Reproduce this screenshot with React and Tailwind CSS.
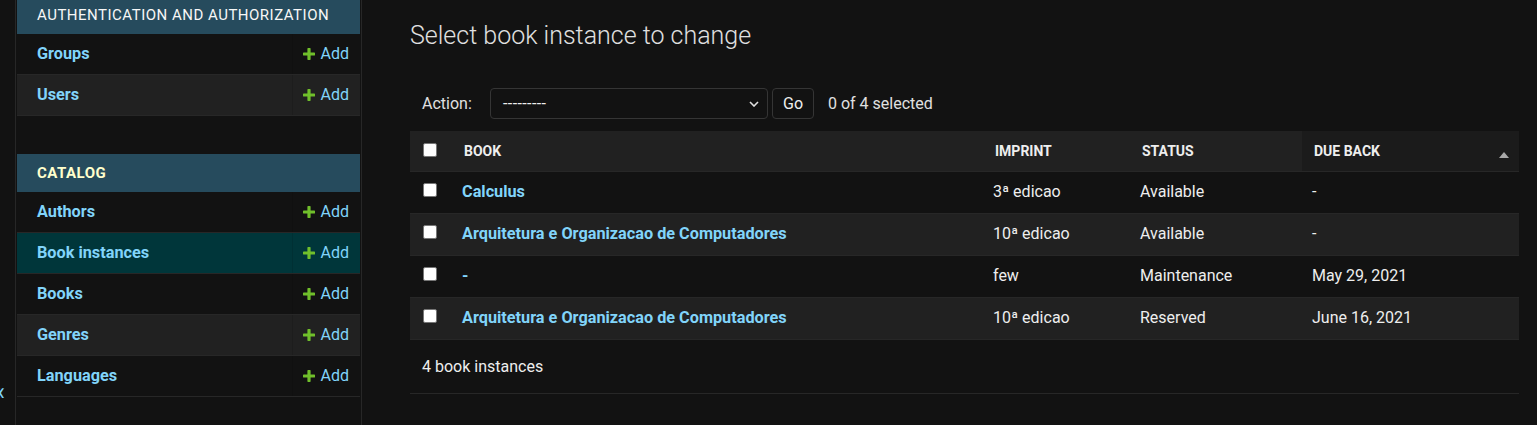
import React from "react";

const Plus = () => (
  <svg width="12" height="12" viewBox="0 0 12 12" className="shrink-0">
    <rect x="4.4" y="0" width="3.2" height="12" rx="0.7" fill="#70bf2b" />
    <rect x="0" y="4.4" width="12" height="3.2" rx="0.7" fill="#70bf2b" />
  </svg>
);

function SideRow({ name, bg }) {
  return (
    <div className={"flex h-[41px] border-b border-[#272727] " + (bg || "")}>
      <div className="flex-1 flex items-center pl-[20px] text-[16.25px] font-bold text-[#81d4fa]">{name}</div>
      <div className="w-[68px] flex items-center justify-end pr-[11px] border-l border-black/10 text-[16px] text-[#81d4fa]">
        <Plus />
        <span className="ml-[6px]">Add</span>
      </div>
    </div>
  );
}

const Checkbox = () => (
  <div className="w-[14px] h-[14px] rounded-[2px] bg-white border border-[#767676]" />
);

const rows = [
  { book: "Calculus", imprint: "3ª edicao", status: "Available", due: "-", bg: "" },
  { book: "Arquitetura e Organizacao de Computadores", imprint: "10ª edicao", status: "Available", due: "-", bg: "bg-[#212121]" },
  { book: "-", imprint: "few", status: "Maintenance", due: "May 29, 2021", bg: "" },
  { book: "Arquitetura e Organizacao de Computadores", imprint: "10ª edicao", status: "Reserved", due: "June 16, 2021", bg: "bg-[#212121]" },
];

export default function App() {
  return (
    <div className="flex w-[1537px] h-[425px] overflow-hidden bg-[#121212] text-[#eeeeee] font-['Roboto',sans-serif]">
      {/* toggle strip */}
      <div className="w-[16px] shrink-0 border-r border-[#272727] overflow-hidden">
        <div className="w-[23px] -ml-[12px] pt-[380px] text-center text-[24px] leading-[24px] text-[#81d4fa]">«</div>
      </div>

      {/* sidebar */}
      <div className="w-[346px] shrink-0 px-[1px] border-r border-[#272727]">
        <div className="h-[34px] bg-[#264b5d] flex items-center pb-[4px] pl-[20px] text-[15px] tracking-[0.5px] uppercase text-[#f7f7f7]">
          Authentication and Authorization
        </div>
        <SideRow name="Groups" />
        <SideRow name="Users" bg="bg-[#212121]" />

        <div className="mt-[38px] h-[38px] bg-[#264b5d] flex items-center pl-[20px] text-[15px] tracking-[0.5px] uppercase font-bold text-[#ffffcc]">
          Catalog
        </div>
        <SideRow name="Authors" />
        <SideRow name="Book instances" bg="bg-[#00363a]" />
        <SideRow name="Books" />
        <SideRow name="Genres" bg="bg-[#212121]" />
        <SideRow name="Languages" />
      </div>

      {/* main */}
      <div className="flex-1 pl-[48px] pr-[18px] pt-[21px]">
        <h1 className="text-[25px] leading-[30px] font-light text-[#e0e0e0] mb-[27px]">Select book instance to change</h1>

        <div className="flex items-center pt-[10px] pb-[12px] pl-[12px] text-[16px] text-[#e0e0e0]">
          <span className="w-[68px]">Action:</span>
          <div className="w-[278px] h-[31px] flex items-center justify-between pl-[12px] pr-[8px] border border-[#353535] rounded-[4px] bg-[#121212] text-[#eeeeee]">
            <span className="tracking-[0.4px]">---------</span>
            <svg width="10" height="6" viewBox="0 0 10 6">
              <polyline points="1,1 5,5 9,1" fill="none" stroke="#e0e0e0" strokeWidth="1.6" />
            </svg>
          </div>
          <div className="ml-[4px] w-[42px] h-[31px] flex items-center justify-center border border-[#353535] rounded-[4px] bg-[#121212] text-[#eeeeee]">
            Go
          </div>
          <span className="ml-[14px]">0 of 4 selected</span>
        </div>

        {/* table */}
        <div className="w-full">
          <div className="grid grid-cols-[42px_531px_147px_172px_1fr] h-[41px] border-b border-[#272727] bg-[#212121] text-[14px] font-bold uppercase text-[#eeeeee]">
            <div className="flex items-center pl-[13px] pb-[2px]"><Checkbox /></div>
            <div className="flex items-center pl-[12px]">Book</div>
            <div className="flex items-center pl-[12px]">Imprint</div>
            <div className="flex items-center pl-[12px]">Status</div>
            <div className="flex items-center justify-between pl-[12px] pr-[10px] bg-[#1b1b1b]">
              <span>Due back</span>
              <svg width="10" height="6" viewBox="0 0 10 6" className="mt-[7px]">
                <polygon points="0,6 5,0 10,6" fill="#a8a8a8" />
              </svg>
            </div>
          </div>

          {rows.map((r, i) => (
            <div key={i} className={"grid grid-cols-[42px_531px_147px_172px_1fr] h-[42px] border-b border-[#272727] text-[16px] " + r.bg}>
              <div className="flex items-center pl-[13px] pb-[5px]"><Checkbox /></div>
              <div className="flex items-center pl-[10px] pb-[1px] text-[16.25px] font-bold text-[#81d4fa]">{r.book}</div>
              <div className="flex items-center pl-[10px] pb-[2px]">{r.imprint}</div>
              <div className="flex items-center pl-[10px] pb-[2px]">{r.status}</div>
              <div className="flex items-center pl-[10px] pb-[2px]">{r.due}</div>
            </div>
          ))}

          <div className="h-[54px] flex items-center pl-[12px] border-b border-[#272727] text-[16px] text-[#eeeeee]">
            4 book instances
          </div>
        </div>
      </div>
    </div>
  );
}
